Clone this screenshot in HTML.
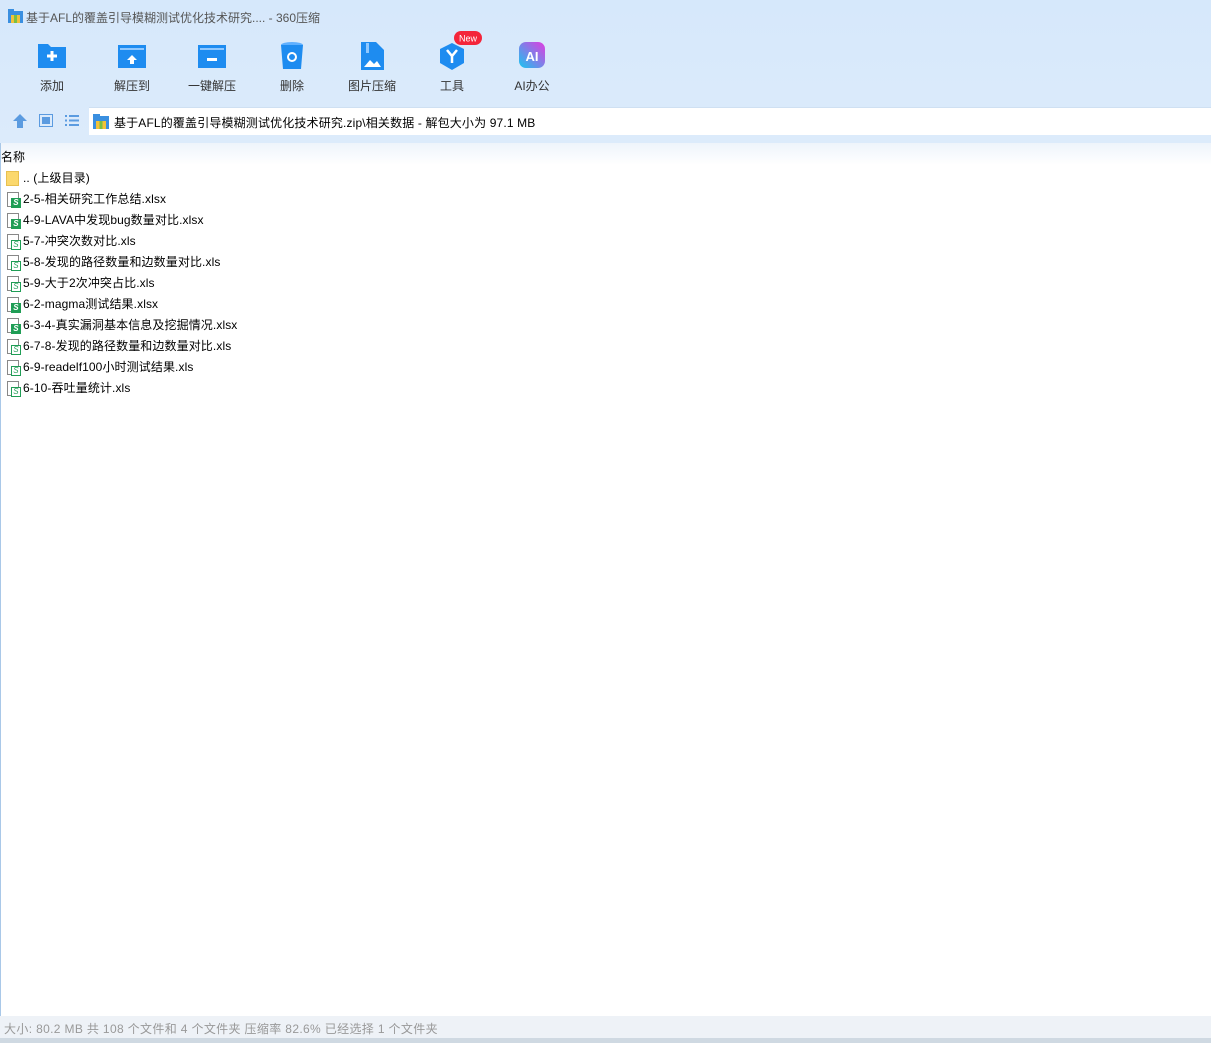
<!DOCTYPE html><html><head><meta charset="utf-8"><style>
*{margin:0;padding:0;box-sizing:border-box}
body{width:1211px;height:1043px;overflow:hidden;background:#fff;font-family:"Liberation Sans","Noto Sans CJK SC",sans-serif;font-size:12px;color:#000;position:relative}
.top{position:absolute;left:0;top:0;width:1211px;height:143px;background:linear-gradient(#d6e8fb,#dcebfb)}
.title{position:absolute;left:26px;top:9px;color:#555;font-size:12px}
.tb{position:absolute;top:0;width:80px;height:100px;color:#333}
.tb svg{position:absolute;left:24px;top:41px}
.tb span{position:absolute;left:0;width:80px;text-align:center;top:77px}
.addr{position:absolute;left:89px;top:107px;width:1122px;height:28px;background:#fff;border-top:1px solid #cfe0f2}
.addr span{position:absolute;left:25px;top:6px;letter-spacing:0.15px}
.hdr{position:absolute;left:0;top:143px;width:1211px;height:22px;background:linear-gradient(#eef4fb,#fff)}
.row{position:absolute;left:6px;height:21px;line-height:21px;white-space:nowrap;letter-spacing:0.1px}
.row i{display:inline-block;vertical-align:middle;width:13px;height:16px;margin-right:4px;position:relative}
.status{position:absolute;left:0;top:1016px;width:1211px;height:22px;background:#eef2f7;color:#999;padding:4px 0 0 4px;letter-spacing:0.35px}
.bot{position:absolute;left:0;top:1038px;width:1211px;height:5px;background:#cfd9e2}
.lb{position:absolute;left:0;top:143px;width:1px;height:873px;background:#a9c8e8}
</style></head><body>
<div class="top">
<svg style="position:absolute;left:8px;top:9px" width="15" height="14"><rect x="0" y="2" width="15" height="12" fill="#3a8fe0"/><rect x="0" y="0" width="6" height="3" fill="#3a8fe0"/><rect x="3" y="6" width="9" height="8" fill="#f2c23a"/><rect x="6" y="6" width="3" height="8" fill="#7bc043"/></svg>
<div class="title">基于AFL的覆盖引导模糊测试优化技术研究.... - 360压缩</div>
<div class="tb" style="left:12px"><svg width="32" height="30"><path d="M2 3h10l3 3h15v21H2z" fill="#1e8cf0"/><path d="M16 10v10M11 15h10" stroke="#fff" stroke-width="3"/></svg><span>添加</span></div>
<div class="tb" style="left:92px"><svg width="32" height="30"><path d="M2 4h28v23H2z" fill="#1e8cf0"/><rect x="4" y="7" width="24" height="2" fill="#8fc8ff"/><path d="M16 14l-5 5h3v4h4v-4h3z" fill="#fff"/></svg><span>解压到</span></div>
<div class="tb" style="left:172px"><svg width="32" height="30"><path d="M2 4h28v23H2z" fill="#1e8cf0"/><rect x="4" y="7" width="24" height="2" fill="#8fc8ff"/><rect x="11" y="17" width="10" height="3" fill="#fff"/></svg><span>一键解压</span></div>
<div class="tb" style="left:252px"><svg width="32" height="30"><ellipse cx="16" cy="4" rx="11" ry="3" fill="#5fb0ff"/><path d="M5 4l2 24h18l2-24z" fill="#1e8cf0"/><circle cx="16" cy="16" r="4" fill="none" stroke="#fff" stroke-width="2"/></svg><span>删除</span></div>
<div class="tb" style="left:332px"><svg width="32" height="30"><path d="M5 1h15l8 8v20H5z" fill="#1e8cf0"/><path d="M8 26l6-7 4 4 3-3 4 6z" fill="#fff"/><rect x="10" y="2" width="3" height="10" fill="#8fc8ff"/></svg><span>图片压缩</span></div>
<div class="tb" style="left:412px"><svg width="32" height="30"><path d="M16 2l12 6v14l-12 7-12-7V8z" fill="#1e8cf0"/><path d="M11 9l5 6 5-6M16 15v7" stroke="#fff" stroke-width="2.5" fill="none"/></svg><svg style="left:42px;top:31px" width="28" height="15"><rect x="0" y="0" width="28" height="14" rx="7" fill="#f4253a"/><text x="14" y="10.5" font-size="9" fill="#fff" text-anchor="middle" font-family="Liberation Sans">New</text></svg><span>工具</span></div>
<div class="tb" style="left:492px"><svg width="32" height="30"><defs><linearGradient id="g" x1="0" y1="1" x2="1" y2="0"><stop offset="0" stop-color="#18c6f0"/><stop offset="1" stop-color="#e23ce0"/></linearGradient></defs><rect x="3" y="1" width="26" height="26" rx="7" fill="url(#g)"/><text x="16" y="20" font-size="13" font-weight="bold" fill="#fff" text-anchor="middle" font-family="Liberation Sans">AI</text></svg><span>AI办公</span></div>
<svg style="position:absolute;left:12px;top:114px" width="16" height="14"><path d="M8 0l7 7h-4v7H5V7H1z" fill="#5b9be0"/></svg>
<svg style="position:absolute;left:39px;top:114px" width="14" height="13"><rect x="0.5" y="0.5" width="13" height="12" fill="none" stroke="#5b9be0"/><rect x="3" y="3" width="8" height="7" fill="#5b9be0"/></svg>
<svg style="position:absolute;left:65px;top:115px" width="14" height="11"><g fill="#5b9be0"><rect x="0" y="0" width="2" height="2"/><rect x="4" y="0" width="10" height="2"/><rect x="0" y="4.5" width="2" height="2"/><rect x="4" y="4.5" width="10" height="2"/><rect x="0" y="9" width="2" height="2"/><rect x="4" y="9" width="10" height="2"/></g></svg>
</div>
<div class="addr"><svg style="position:absolute;left:4px;top:6px" width="16" height="15"><rect x="0" y="2" width="16" height="13" fill="#3a8fe0"/><rect x="0" y="0" width="7" height="3" fill="#3a8fe0"/><rect x="3" y="7" width="10" height="8" fill="#f2c23a"/><rect x="6.5" y="7" width="3" height="8" fill="#7bc043"/></svg><span>基于AFL的覆盖引导模糊测试优化技术研究.zip\相关数据 - 解包大小为 97.1 MB</span></div>
<div class="hdr"><span style="position:absolute;left:1px;top:5px">名称</span></div>
<div class="lb"></div>
<div class="row" style="top:168px"><i style="background:#fbd86d;border:1px solid #e8c050;width:13px;height:15px"></i>.. (上级目录)</div>
<div id="rows"></div>
<script>
var f=[["2-5-相关研究工作总结.xlsx",1],["4-9-LAVA中发现bug数量对比.xlsx",1],["5-7-冲突次数对比.xls",0],["5-8-发现的路径数量和边数量对比.xls",0],["5-9-大于2次冲突占比.xls",0],["6-2-magma测试结果.xlsx",1],["6-3-4-真实漏洞基本信息及挖掘情况.xlsx",1],["6-7-8-发现的路径数量和边数量对比.xls",0],["6-9-readelf100小时测试结果.xls",0],["6-10-吞吐量统计.xls",0]];
var h="";f.forEach(function(x,i){var t=189+i*21;var s=x[1]?'<span style="position:absolute;left:3px;top:5px;width:10px;height:10px;background:#1f9d55;color:#fff;font-size:8px;line-height:10px;text-align:center;font-weight:bold">S</span>':'<span style="position:absolute;left:3px;top:5px;width:10px;height:10px;border:1px solid #1f9d55;color:#1f9d55;background:#fff;font-size:8px;line-height:8px;text-align:center">S</span>';
h+='<div class="row" style="top:'+t+'px"><i style="border:1px solid #888;background:#fff;width:12px;height:15px;margin-left:1px">'+s+'</i>'+x[0]+'</div>';});
document.getElementById("rows").innerHTML=h;
</script>
<div class="status">大小: 80.2 MB 共 108 个文件和 4 个文件夹 压缩率 82.6% 已经选择 1 个文件夹</div>
<div class="bot"></div>
</body></html>
